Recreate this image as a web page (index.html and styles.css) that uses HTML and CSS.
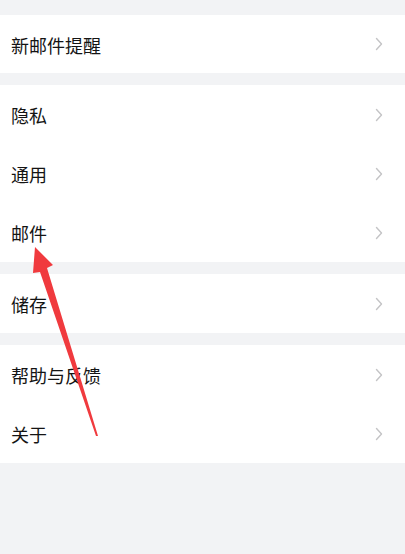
FILE: index.html
```html
<!DOCTYPE html>
<html lang="zh-CN">
<head>
<meta charset="utf-8">
<link rel="stylesheet" href="styles.css">
</head>
<body>
<div class="page">
  <div class="group first">
    <div class="row short"><span class="label">新邮件提醒</span><svg class="chev" viewBox="0 0 8 14"><path d="M1.5 1.5 L6.5 7 L1.5 12.5"/></svg></div>
  </div>
  <div class="group">
    <div class="row"><span class="label">隐私</span><svg class="chev" viewBox="0 0 8 14"><path d="M1.5 1.5 L6.5 7 L1.5 12.5"/></svg></div>
    <div class="row"><span class="label">通用</span><svg class="chev" viewBox="0 0 8 14"><path d="M1.5 1.5 L6.5 7 L1.5 12.5"/></svg></div>
    <div class="row"><span class="label">邮件</span><svg class="chev" viewBox="0 0 8 14"><path d="M1.5 1.5 L6.5 7 L1.5 12.5"/></svg></div>
  </div>
  <div class="group">
    <div class="row"><span class="label">储存</span><svg class="chev" viewBox="0 0 8 14"><path d="M1.5 1.5 L6.5 7 L1.5 12.5"/></svg></div>
  </div>
  <div class="group">
    <div class="row"><span class="label">帮助与反馈</span><svg class="chev" viewBox="0 0 8 14"><path d="M1.5 1.5 L6.5 7 L1.5 12.5"/></svg></div>
    <div class="row"><span class="label">关于</span><svg class="chev" viewBox="0 0 8 14"><path d="M1.5 1.5 L6.5 7 L1.5 12.5"/></svg></div>
  </div>
  <svg class="arrow" viewBox="0 0 405 554">
    <path d="M35 247 L53 265 L47 268 L98 436 L96 436 L40 272 L33 273 Z"/>
  </svg>
</div>
</body>
</html>
```

FILE: styles.css
```css
html, body {
  margin: 0;
  padding: 0;
  background: #f2f3f5;
}
body {
  font-family: "Noto Sans CJK SC", "Noto Sans", sans-serif;
  width: 405px;
  height: 554px;
  overflow: hidden;
}
.page {
  position: relative;
  padding-top: 15px;
  display: flex;
  flex-direction: column;
  gap: 12px;
  height: 554px;
  box-sizing: border-box;
}
.group {
  background: #ffffff;
  display: flex;
  flex-direction: column;
}
.row {
  height: 59px;
  display: flex;
  align-items: center;
  justify-content: space-between;
  padding: 0 22px 0 11px;
}
.row.short {
  height: 58px;
}
.label {
  font-size: 18px;
  color: #141414;
  line-height: 1;
  padding-top: 1px;
}
.chev {
  width: 8px;
  height: 14px;
  fill: none;
  stroke: #c4c4c6;
  stroke-width: 1.4;
  stroke-linecap: round;
  stroke-linejoin: round;
}
.arrow {
  position: absolute;
  left: 0;
  top: 0;
  width: 405px;
  height: 554px;
  fill: #f03a3e;
  pointer-events: none;
}
```
